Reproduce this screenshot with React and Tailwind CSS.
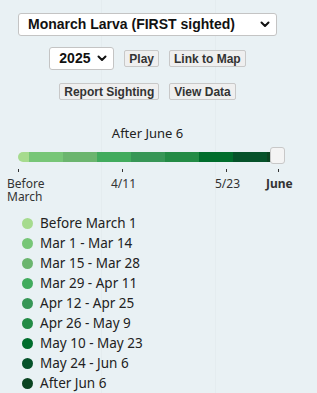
import React, { useState } from "react";

const colors = [
    "#a6db8e",
    "#77c677",
    "#6bb56e",
    "#41ab5d",
    "#379656",
    "#238b45",
    "#006d2c",
    "#06522a",
    "#0b4421",
];

const legend = [
    "Before March 1",
    "Mar 1 - Mar 14",
    "Mar 15 - Mar 28",
    "Mar 29 - Apr 11",
    "Apr 12 - Apr 25",
    "Apr 26 - May 9",
    "May 10 - May 23",
    "May 24 - Jun 6",
    "After Jun 6",
];

function Chevron() {
    return (
        <svg width="10" height="7" viewBox="0 0 10 7" className="pointer-events-none">
            <path d="M1.5 1.5 L5 5 L8.5 1.5" fill="none" stroke="#111" strokeWidth="2" strokeLinecap="round" strokeLinejoin="round" />
        </svg>
    );
}

function Btn({ children }) {
    return (
        <button className="h-[17px] px-[4px] bg-[#efefef] border border-[#c8c8c8] rounded-[2px] text-[12px] leading-none text-[#333] font-bold font-['Liberation_Sans',Arial,sans-serif]">
            {children}
        </button>
    );
}

export default function App() {
    const [species] = useState("Monarch Larva (FIRST sighted)");

    return (
        <div className="w-[317px] h-[393px] bg-[#e9f1f4] overflow-hidden relative font-['Noto_Sans',sans-serif]">
            {/* faint map tile borders */}
            <div className="absolute left-[101px] top-0 bottom-0 w-px bg-[#e4ecef]" />
            <div className="absolute left-[215px] top-0 bottom-0 w-px bg-[#e4ecef]" />

            <div className="relative w-[295px] flex flex-col items-center pt-[13px]">
                <div className="relative w-[259px] h-[23px] bg-white border border-[#c4c4c4] rounded-[3px] flex items-center pl-[9px] pr-[6px] justify-between">
                    <span className="text-[14px] font-bold text-[#111] font-['Liberation_Sans',Arial,sans-serif]">{species}</span>
                    <Chevron />
                </div>

                <div className="flex items-center mt-[11px] gap-[10px]">
                    <div className="w-[65px] h-[23px] bg-white border border-[#c4c4c4] rounded-[3px] flex items-center pl-[9px] pr-[6px] justify-between">
                        <span className="text-[14px] font-bold text-[#111] font-['Liberation_Sans',Arial,sans-serif]">2025</span>
                        <Chevron />
                    </div>
                    <Btn>Play</Btn>
                    <Btn>Link to Map</Btn>
                </div>

                <div className="flex items-center mt-[13px] gap-[10px]">
                    <Btn>Report Sighting</Btn>
                    <Btn>View Data</Btn>
                </div>

                <div className="mt-[27px] text-[13px] text-[#222] leading-none">After June 6</div>
            </div>

            {/* slider */}
            <div className="relative mt-[7px] ml-[18px] w-[267px] h-[18px]">
                <div className="absolute left-0 top-[5px] w-[256px] h-[10px] flex rounded-l-full overflow-hidden">
                    <div className="w-[11px]" style={{ backgroundColor: colors[0] }} />
                    {colors.slice(1).map((c, i) => (
                        <div key={c} className={i === 7 ? "flex-1" : "w-[34px]"} style={{ backgroundColor: c }} />
                    ))}
                </div>
                <div className="absolute left-[252px] top-0 w-[15px] h-[17px] bg-[#f4f4f4] border border-[#c8c8c8] rounded-[3px]" />
            </div>

            {/* ticks */}
            <div className="relative h-[30px] text-[12px] text-[#333] leading-[13px]">
                <div className="absolute left-[18px] top-[4px] w-px h-[3px] bg-[#333]" />
                <div className="absolute left-[122px] top-[4px] w-px h-[3px] bg-[#333]" />
                <div className="absolute left-[226px] top-[4px] w-px h-[3px] bg-[#333]" />
                <div className="absolute left-[278px] top-[4px] w-px h-[3px] bg-[#333]" />
                <div className="absolute left-[7px] top-[12px]">Before<br />March</div>
                <div className="absolute left-[111px] top-[12px]">4/11</div>
                <div className="absolute left-[215px] top-[12px]">5/23</div>
                <div className="absolute left-[266px] top-[12px] font-bold">June</div>
            </div>

            {/* legend */}
            <ul className="relative mt-[18px] ml-[22px] flex flex-col">
                {legend.map((label, i) => (
                    <li key={label} className="flex items-center h-[20px] gap-[7px]">
                        <span className="w-[11px] h-[11px] rounded-full" style={{ backgroundColor: colors[i] }} />
                        <span className="text-[13.5px] text-[#222]">{label}</span>
                    </li>
                ))}
            </ul>
        </div>
    );
}
